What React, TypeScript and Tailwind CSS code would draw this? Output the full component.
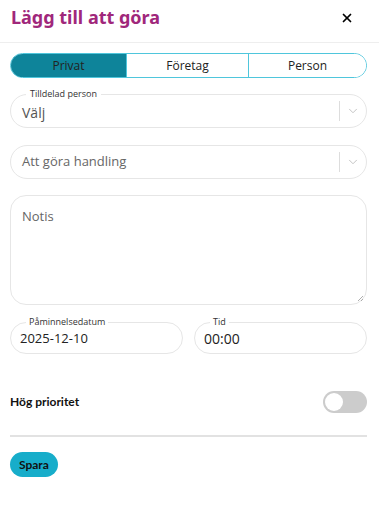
import { useState } from 'react'
import { X, ChevronDown } from 'lucide-react'

const tabs = ['Privat', 'Företag', 'Person']

function SelectBox({ label, value, placeholder }: { label?: string; value?: string; placeholder?: string }) {
  return (
    <div className="relative">
      {label ? (
        <span className="absolute left-[16px] -top-[6px] bg-white px-[4px] text-[9px] leading-[11px] text-[#333]">
          {label}
        </span>
      ) : null}
      <div className="flex h-[34px] items-center rounded-[17px] border border-[#e6e6e6] pl-[11px]">
        <span
          className={
            value ? 'flex-1 text-[14px] text-[#555] pt-[2px]' : 'flex-1 text-[13px] text-[#666]'
          }
        >
          {value ?? placeholder}
        </span>
        <span className="h-[20px] w-px bg-[#ddd]" />
        <ChevronDown size={14} strokeWidth={1.5} className="mx-[6px] text-[#bbb]" />
      </div>
    </div>
  )
}

function Field({ label, value, big }: { label: string; value: string; big?: boolean }) {
  return (
    <div className="relative flex-1">
      <span className="absolute left-[16px] -top-[6px] bg-white px-[3px] text-[9px] leading-[11px] text-[#333]">
        {label}
      </span>
      <div className="flex h-[32px] items-center rounded-[16px] border border-[#e6e6e6] px-[9px] pt-[1px]">
        <span className={big ? 'text-[14px] text-[#222]' : 'text-[13px] text-[#222]'}>{value}</span>
      </div>
    </div>
  )
}

export default function App() {
  const [tab, setTab] = useState(0)
  const [prio, setPrio] = useState(false)

  return (
    <div className="w-[379px] h-[522px] bg-white font-['Open_Sans',sans-serif]">
      <div className="flex h-[43px] items-center justify-between border-b border-[#eeeeee] pl-[11px] pr-[25px]">
        <h1 className="font-['Noto_Sans',sans-serif] text-[18px] font-bold text-[#a0277b] -mt-[8px]">
          Lägg till att göra
        </h1>
        <X size={14} strokeWidth={3} className="text-black -mt-[6px]" />
      </div>

      <div className="pl-[10px] pr-[12px] pt-[10px]">
        <div className="flex h-[25px] overflow-hidden rounded-full border border-[#4fc6dc]">
          {tabs.map((t, i) => (
            <button
              key={t}
              onClick={() => setTab(i)}
              className={
                'flex items-center justify-center text-[12px] font-medium text-[#222] ' +
                (i === 0 ? 'w-[115px] ' : i === 1 ? 'w-[122px] border-l border-[#4fc6dc] ' : 'flex-1 border-l border-[#4fc6dc] ') +
                (tab === i ? 'bg-[#0e849a]' : 'bg-white')
              }
            >
              {t}
            </button>
          ))}
        </div>

        <div className="mt-[16px]">
          <SelectBox label="Tilldelad person" value="Välj" />
        </div>
        <div className="mt-[17px]">
          <SelectBox placeholder="Att göra handling" />
        </div>

        <div className="mt-[16px] h-[110px] rounded-[16px] border border-[#e6e6e6] px-[11px] pt-[7px] relative">
          <span className="text-[13px] text-[#666]">Notis</span>
          <svg className="absolute right-[2px] bottom-[2px]" width="7" height="7" viewBox="0 0 7 7">
            <path d="M1 6L6 1M4 6L6 4" stroke="#999" strokeWidth="0.8" />
          </svg>
        </div>

        <div className="mt-[17px] flex gap-[11px]">
          <Field label="Påminnelsedatum" value="2025-12-10" />
          <Field label="Tid" value="00:00" big />
        </div>

        <div className="mt-[37px] flex items-center justify-between">
          <span className="font-['Lato',sans-serif] text-[12px] font-bold text-[#111]">Hög prioritet</span>
          <button
            onClick={() => setPrio(!prio)}
            className={
              'flex h-[22px] w-[44px] items-center rounded-full px-[2px] ' +
              (prio ? 'bg-[#17adc9] justify-end' : 'bg-[#cccccc] justify-start')
            }
          >
            <span className="h-[18px] w-[18px] rounded-full bg-white" />
          </button>
        </div>

        <div className="mt-[22px] h-[2px] bg-[#e2e2e2]" />

        <button className="mt-[15px] h-[25px] rounded-full bg-[#17adca] px-[9px] font-['Lato',sans-serif] text-[12px] font-bold text-[#111]">
          Spara
        </button>
      </div>
    </div>
  )
}
